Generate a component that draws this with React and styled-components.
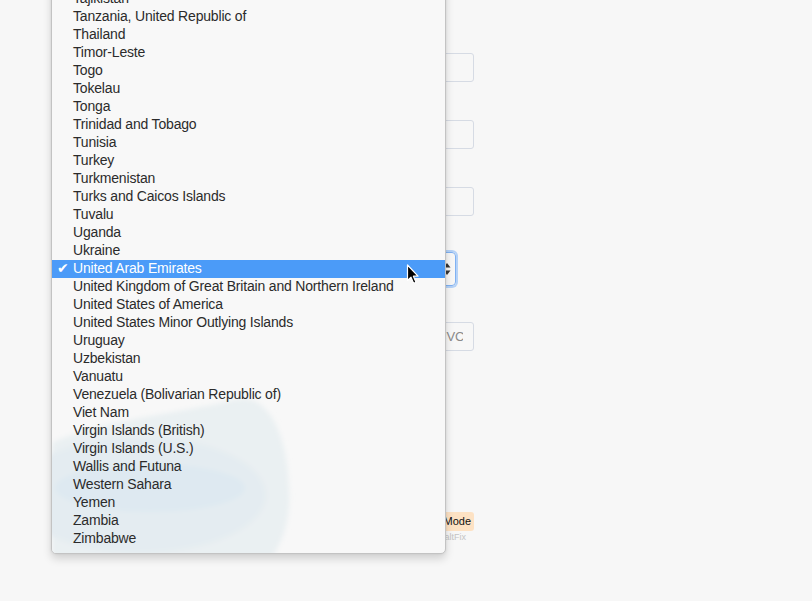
import React from "react";
import styled, { createGlobalStyle } from "styled-components";

const GlobalStyle = createGlobalStyle`
  html, body {
    margin: 0;
    background: #f7f7f7;
    font-family: "Liberation Sans", Arial, sans-serif;
  }
`;

const Page = styled.div`
  position: relative;
  width: 812px;
  height: 601px;
  overflow: hidden;
`;

const Form = styled.form`
  width: 300px;
  margin-left: 174px;
  padding-top: 53px;
  display: flex;
  flex-direction: column;
`;

const Field = styled.div`
  display: flex;
  justify-content: ${(p) => (p.$split ? "space-between" : "flex-start")};
  margin-top: ${(p) => p.$gap || 0}px;
`;

const Input = styled.input`
  box-sizing: border-box;
  height: 29px;
  width: ${(p) => p.$width || "100%"};
  border: 1px solid #d6dbe4;
  border-radius: 3px;
  background: #f7f7f7;
  padding: 0 10px;
  font-family: "Liberation Sans", Arial, sans-serif;
  font-size: 13px;
  color: #333;
  &::placeholder {
    color: #8a8a8a;
  }
`;

const SelectBox = styled.div`
  box-sizing: border-box;
  width: 282px;
  height: 34px;
  display: flex;
  align-items: center;
  justify-content: flex-end;
  padding: 0 4px 0 10px;
  border: 1px solid #7fb1f2;
  border-radius: 4px;
  box-shadow: 0 0 0 2px #b5d2f7;
`;

const Footer = styled.div`
  margin-top: 161px;
  display: flex;
  flex-direction: column;
  align-items: flex-end;
`;

const ModeBadge = styled.span`
  background: #fde2c4;
  border-radius: 3px;
  padding: 2px 3px 3px 4px;
  font-size: 11px;
  line-height: 14px;
  color: #111;
`;

const Credit = styled.span`
  margin-top: 1px;
  margin-right: 8px;
  font-size: 9px;
  color: #c4c4c4;
`;

/* native-looking popup list of the country select */
const Menu = styled.ul`
  position: absolute;
  left: 51px;
  top: -15px;
  width: 395px;
  box-sizing: border-box;
  margin: 0;
  padding: 4px 0 5px;
  list-style: none;
  background: #f8f8f8;
  border: 1px solid #c3c3c3;
  border-radius: 0 0 5px 5px;
  box-shadow: 0 5px 8px rgba(0, 0, 0, 0.15), 0 0 3px rgba(0, 0, 0, 0.08);
  overflow: hidden;
`;

const Haze = styled.svg`
  position: absolute;
  left: 0;
  top: 412px;
`;

const Item = styled.li`
  position: relative;
  box-sizing: border-box;
  height: 18px;
  display: flex;
  align-items: center;
  padding: 0 0 2px 21px;
  font-size: 14px;
  letter-spacing: -0.18px;
  color: ${(p) => (p.$active ? "#fff" : "#2b2b2b")};
  background: ${(p) => (p.$active ? "#4b9bf8" : "transparent")};
  white-space: nowrap;
`;

const Check = styled.span`
  position: absolute;
  left: 5px;
  top: -1px;
  font-family: "DejaVu Sans", sans-serif;
  font-size: 14px;
  line-height: 18px;
`;

const Pointer = styled.svg`
  position: absolute;
  left: 406px;
  top: 264px;
`;

const countries = [
  "Tajikistan",
  "Tanzania, United Republic of",
  "Thailand",
  "Timor-Leste",
  "Togo",
  "Tokelau",
  "Tonga",
  "Trinidad and Tobago",
  "Tunisia",
  "Turkey",
  "Turkmenistan",
  "Turks and Caicos Islands",
  "Tuvalu",
  "Uganda",
  "Ukraine",
  "United Arab Emirates",
  "United Kingdom of Great Britain and Northern Ireland",
  "United States of America",
  "United States Minor Outlying Islands",
  "Uruguay",
  "Uzbekistan",
  "Vanuatu",
  "Venezuela (Bolivarian Republic of)",
  "Viet Nam",
  "Virgin Islands (British)",
  "Virgin Islands (U.S.)",
  "Wallis and Futuna",
  "Western Sahara",
  "Yemen",
  "Zambia",
  "Zimbabwe",
];

const selected = "United Arab Emirates";

export default function App() {
  return (
    <Page>
      <GlobalStyle />
      <Form>
        <Field>
          <Input aria-label="Name" />
        </Field>
        <Field $gap={38}>
          <Input aria-label="Email" />
        </Field>
        <Field $gap={38}>
          <Input aria-label="Card number" />
        </Field>
        <Field $gap={36}>
          <SelectBox aria-label="Country">
            <svg width="8" height="14" viewBox="0 0 8 14">
              <path d="M4 1 L7.5 5.5 H0.5 Z" fill="#333" />
              <path d="M4 13 L7.5 8.5 H0.5 Z" fill="#333" />
            </svg>
          </SelectBox>
        </Field>
        <Field $gap={36} $split>
          <Input $width="120px" aria-label="Expiry" />
          <Input $width="48px" placeholder="CVC" />
        </Field>
        <Footer>
          <ModeBadge>Test Mode</ModeBadge>
          <Credit>by SaltFix</Credit>
        </Footer>
      </Form>

      <Menu>
        <Haze width="250" height="160" viewBox="0 0 250 160">
          <defs>
            <filter id="soft" x="-10%" y="-10%" width="120%" height="120%">
              <feGaussianBlur stdDeviation="2.5" />
            </filter>
          </defs>
          <g filter="url(#soft)">
            <path
              d="M0,45 C40,25 120,15 170,5 C185,0 200,-2 210,8 C225,20 236,50 237,90 C239,120 232,140 220,160 L0,160 Z"
              fill="#eaf0f2"
            />
            <ellipse cx="88" cy="97" rx="126" ry="58" fill="#e4ecf1" />
            <ellipse cx="98" cy="90" rx="95" ry="24" fill="#dee9f1" />
          </g>
        </Haze>
        {countries.map((c) => (
          <Item key={c} $active={c === selected}>
            {c === selected && <Check>✔</Check>}
            {c}
          </Item>
        ))}
      </Menu>

      <Pointer width="14" height="22" viewBox="0 0 14 22">
        <path
          d="M1.5 1 L1.5 16.5 L5 13.2 L7.6 19.2 L10 18.2 L7.4 12.2 L12 12.2 Z"
          fill="#000"
          stroke="#fff"
          strokeWidth="1.2"
          strokeLinejoin="round"
        />
      </Pointer>
    </Page>
  );
}
